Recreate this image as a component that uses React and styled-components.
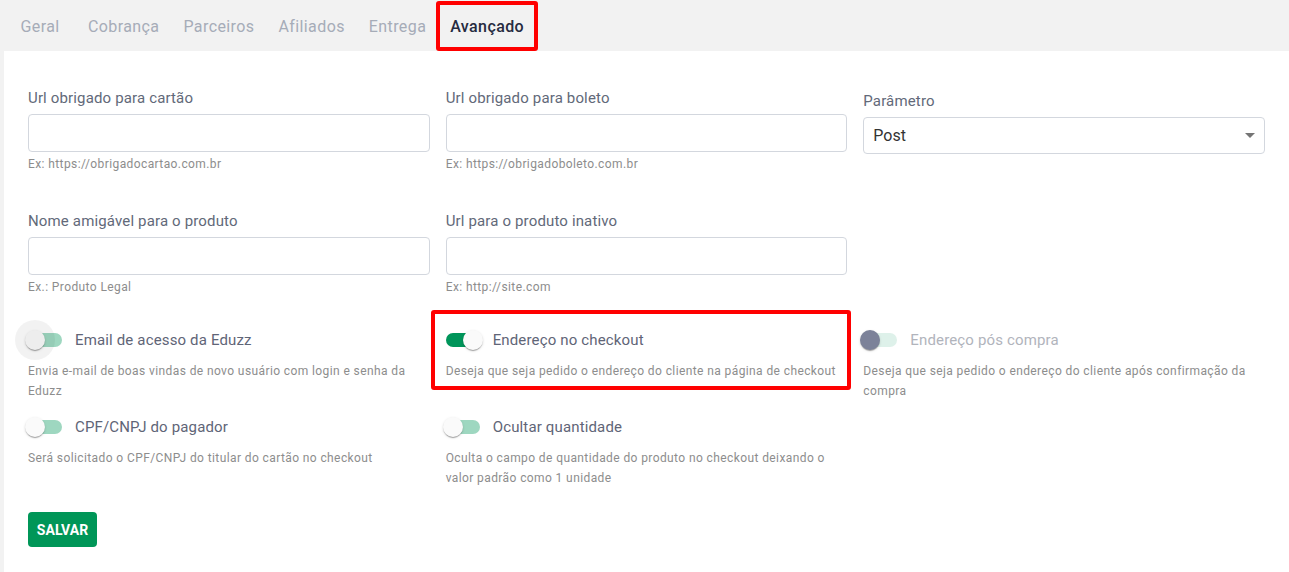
import React from "react";
import styled, { createGlobalStyle, css } from "styled-components";

const GlobalStyle = createGlobalStyle`
  *, *::before, *::after { box-sizing: border-box; }
  html, body { margin: 0; padding: 0; background: #f2f2f2; }
  body { font-family: Roboto, "Liberation Sans", Arial, sans-serif; }
`;

const tabs = ["Geral", "Cobrança", "Parceiros", "Afiliados", "Entrega", "Avançado"];

const fields = [
  { label: "Url obrigado para cartão", helper: "Ex: https://obrigadocartao.com.br" },
  { label: "Url obrigado para boleto", helper: "Ex: https://obrigadoboleto.com.br" },
  { label: "Parâmetro", select: "Post" },
  { label: "Nome amigável para o produto", helper: "Ex.: Produto Legal" },
  { label: "Url para o produto inativo", helper: "Ex: http://site.com" },
];

const toggles = [
  {
    label: "Email de acesso da Eduzz",
    text: "Envia e-mail de boas vindas de novo usuário com login e senha da Eduzz",
    focused: true,
  },
  {
    label: "Endereço no checkout",
    text: "Deseja que seja pedido o endereço do cliente na página de checkout",
    checked: true,
    marked: true,
  },
  {
    label: "Endereço pós compra",
    text: "Deseja que seja pedido o endereço do cliente após confirmação da compra",
    disabled: true,
  },
  {
    label: "CPF/CNPJ do pagador",
    text: "Será solicitado o CPF/CNPJ do titular do cartão no checkout",
  },
  {
    label: "Ocultar quantidade",
    text: "Oculta o campo de quantidade do produto no checkout deixando o valor padrão como 1 unidade",
  },
];

const Switch = ({ checked, disabled, focused }) => (
  <SwitchRoot>
    <Track checked={checked} disabled={disabled} />
    <Thumb checked={checked} disabled={disabled} focused={focused} />
  </SwitchRoot>
);

const App = () => (
  <Page>
    <GlobalStyle />
    <TabBar>
      {tabs.map((t) => (
        <Tab key={t} active={t === "Avançado"}>
          {t}
        </Tab>
      ))}
    </TabBar>
    <Card>
      <FieldGrid>
        {fields.map((f) => (
          <Field key={f.label} shifted={!!f.select}>
            <Label>{f.label}</Label>
            {f.select ? (
              <SelectBox>
                {f.select}
                <Caret />
              </SelectBox>
            ) : (
              <Input type="text" />
            )}
            {f.helper && <Helper>{f.helper}</Helper>}
          </Field>
        ))}
      </FieldGrid>

      <ToggleGrid>
        {toggles.map((t) => (
          <ToggleItem key={t.label} marked={t.marked}>
            <ToggleLine>
              <Switch checked={t.checked} disabled={t.disabled} focused={t.focused} />
              <ToggleLabel disabled={t.disabled}>{t.label}</ToggleLabel>
            </ToggleLine>
            <Helper>{t.text}</Helper>
          </ToggleItem>
        ))}
      </ToggleGrid>

      <SaveButton>SALVAR</SaveButton>
    </Card>
  </Page>
);

const Page = styled.div`
  min-height: 572px;
  display: flex;
  flex-direction: column;
`;

const TabBar = styled.div`
  display: flex;
  height: 51px;
  padding: 1px 0 0 4px;
`;

const Tab = styled.div`
  position: relative;
  display: flex;
  align-items: center;
  justify-content: center;
  min-width: 72px;
  height: 50px;
  padding: 0 12px;
  font-size: 16px;
  letter-spacing: 0.4px;
  color: ${(p) => (p.active ? "#262b40" : "#a6acb8")};
  font-weight: ${(p) => (p.active ? 500 : 400)};
  ${(p) =>
    p.active &&
    css`
      &::after {
        content: "";
        position: absolute;
        inset: 0 -2px 0 -2px;
        border: 4px solid #ff0000;
        border-radius: 3px;
      }
    `}
`;

const Card = styled.div`
  flex: 1;
  margin-left: 4px;
  background: #fff;
  padding: 37px 24px 24px;
`;

const FieldGrid = styled.div`
  display: grid;
  grid-template-columns: repeat(3, 1fr);
  column-gap: 16px;
  row-gap: 37px;
`;

const Field = styled.div`
  display: flex;
  flex-direction: column;
  margin-top: ${(p) => (p.shifted ? "3px" : "0")};
`;

const Label = styled.label`
  font-size: 15px;
  line-height: 20px;
  letter-spacing: 0.15px;
  color: #626979;
  margin-bottom: 6px;
`;

const Input = styled.input`
  height: 38px;
  width: 100%;
  border: 1px solid #d3d7de;
  border-radius: 4px;
  padding: 0 10px;
  font-size: 16px;
  font-family: inherit;
  outline: none;
  background: #fff;
`;

const SelectBox = styled.div`
  position: relative;
  height: 37px;
  border: 1px solid #d3d7de;
  border-radius: 4px;
  padding: 0 9px;
  display: flex;
  align-items: center;
  font-size: 16px;
  color: #333;
`;

const Caret = styled.span`
  margin-left: auto;
  width: 0;
  height: 0;
  border-left: 5px solid transparent;
  border-right: 5px solid transparent;
  border-top: 5px solid #757575;
`;

const Helper = styled.div`
  font-size: 12px;
  line-height: 20px;
  letter-spacing: 0.4px;
  color: #8d8d8d;
  margin-top: 2px;
`;

const ToggleGrid = styled.div`
  margin-top: 24px;
  display: grid;
  grid-template-columns: repeat(3, 1fr);
  column-gap: 16px;
  row-gap: 7px;
`;

const ToggleItem = styled.div`
  position: relative;
  ${(p) =>
    p.marked &&
    css`
      &::after {
        content: "";
        position: absolute;
        top: -11px;
        left: -15px;
        right: -4px;
        height: 80px;
        border: 4px solid #ff0000;
        border-radius: 3px;
        pointer-events: none;
      }
    `}
`;

const ToggleLine = styled.div`
  display: flex;
  align-items: center;
  height: 38px;
  margin-left: -12px;
`;

const SwitchRoot = styled.span`
  position: relative;
  flex-shrink: 0;
  width: 59px;
  height: 38px;
`;

const Track = styled.span`
  position: absolute;
  left: 12px;
  top: 12px;
  width: 34px;
  height: 14px;
  border-radius: 7px;
  background: #00955a;
  opacity: ${(p) => (p.checked ? 1 : p.disabled ? 0.13 : 0.38)};
`;

const Thumb = styled.span`
  position: absolute;
  top: 9px;
  left: ${(p) => (p.checked ? "29px" : "9px")};
  width: 20px;
  height: 20px;
  border-radius: 50%;
  background: ${(p) => (p.disabled ? "#7c8299" : "#fafafa")};
  box-shadow: 0 2px 1px -1px rgba(0, 0, 0, 0.2), 0 1px 1px 0 rgba(0, 0, 0, 0.14),
    0 1px 3px 0 rgba(0, 0, 0, 0.12);
  ${(p) =>
    p.focused &&
    css`
      &::before {
        content: "";
        position: absolute;
        left: -10px;
        top: -10px;
        width: 40px;
        height: 40px;
        border-radius: 50%;
        background: rgba(0, 0, 0, 0.05);
      }
    `}
`;

const ToggleLabel = styled.span`
  font-size: 15px;
  letter-spacing: 0.15px;
  color: ${(p) => (p.disabled ? "#b1b4bc" : "#5f6577")};
`;

const SaveButton = styled.button`
  margin-top: 24px;
  height: 35px;
  padding: 0 8px;
  width: 69px;
  border: none;
  border-radius: 4px;
  background: #009658;
  color: #fff;
  font-family: inherit;
  font-weight: 700;
  font-size: 14px;
  cursor: pointer;
`;

export default App;
